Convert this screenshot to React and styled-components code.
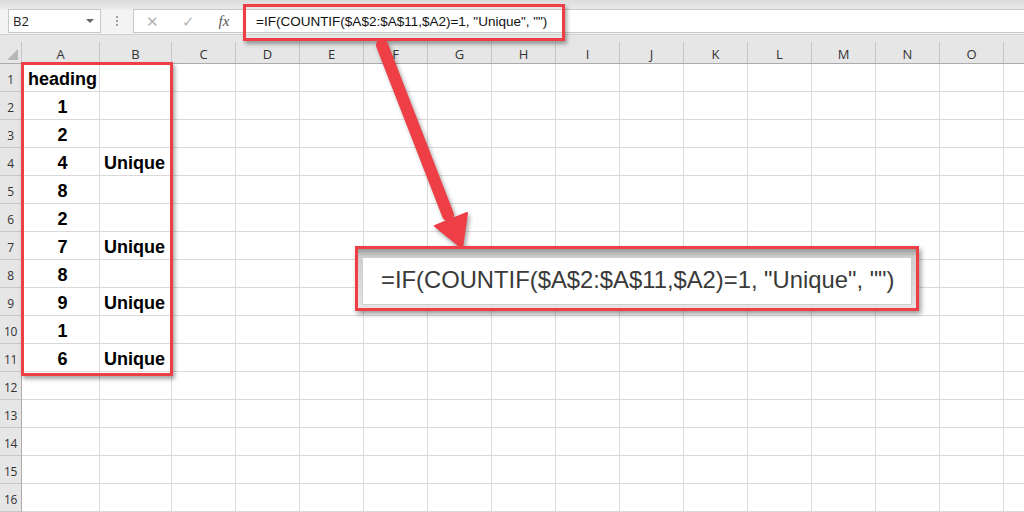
import React from 'react';
import styled, { createGlobalStyle } from 'styled-components';

const GlobalStyle = createGlobalStyle`
    html, body {
        margin: 0;
        padding: 0;
        background: #ffffff;
        overflow: hidden;
    }
    * {
        box-sizing: border-box;
    }
`

const RED = '#ee3f46';

const Page = styled.div`
    position: relative;
    width: 1024px;
    height: 512px;
    overflow: hidden;
    font-family: "Open Sans", "Liberation Sans", sans-serif;
    background: #ffffff;
`

const FormulaBar = styled.div`
    display: flex;
    align-items: flex-end;
    height: 35px;
    padding: 0 0 1px 8px;
    background: linear-gradient(#dcdcdc 0px, #e9e9e9 9px, #f3f3f3 10px, #f3f3f3 100%);
    border-bottom: 1px solid #d0d0d0;
`

const NameBox = styled.div`
    display: flex;
    align-items: center;
    justify-content: space-between;
    width: 93px;
    height: 24px;
    padding: 0 6px 0 4px;
    background: #ffffff;
    border: 1px solid #c8c8c8;
    font-size: 13px;
    color: #222;
`

const Caret = styled.span`
    width: 0;
    height: 0;
    border-left: 4px solid transparent;
    border-right: 4px solid transparent;
    border-top: 4px solid #666;
`

const Dots = styled.div`
    display: flex;
    flex-direction: column;
    justify-content: center;
    gap: 2px;
    width: 32px;
    height: 24px;
    align-items: center;
    span {
        width: 2px;
        height: 2px;
        background: #a0a0a0;
    }
`

const FormulaInput = styled.div`
    flex: 1;
    display: flex;
    align-items: center;
    height: 24px;
    background: #ffffff;
    border: 1px solid #c8c8c8;
    border-right: none;
`

const ToolButton = styled.div`
    display: flex;
    align-items: center;
    justify-content: center;
    width: ${p => p.w || 36}px;
    height: 22px;
    color: #b4b4b4;
    font-size: 15px;
`

const Fx = styled.span`
    font-family: "Liberation Serif", serif;
    font-style: italic;
    font-size: 15px;
    color: #555;
`

const FormulaText = styled.div`
    padding-left: 14px;
    font-family: "Liberation Sans", sans-serif;
    font-size: 13.5px;
    color: #111;
    white-space: nowrap;
`

const Sheet = styled.div`
    display: flex;
    flex-direction: column;
`

const HeadRow = styled.div`
    display: flex;
    height: 29px;
    padding-top: 7px;
    background: #e6e6e6;
    border-bottom: 1px solid #ababab;
`

const Corner = styled.div`
    position: relative;
    flex: 0 0 22px;
    border-right: 1px solid #c6c6c6;
    &::after {
        content: "";
        position: absolute;
        right: 3px;
        bottom: 3px;
        width: 0;
        height: 0;
        border-left: 11px solid transparent;
        border-bottom: 11px solid #b7b7b7;
    }
`

const ColHead = styled.div`
    flex: 0 0 ${p => p.w}px;
    display: flex;
    align-items: center;
    justify-content: center;
    padding-top: 3px;
    border-right: 1px solid #c6c6c6;
    font-size: 13px;
    color: #333;
`

const Row = styled.div`
    display: flex;
    height: 28px;
`

const RowHead = styled.div`
    flex: 0 0 22px;
    display: flex;
    align-items: center;
    justify-content: center;
    padding-top: 4px;
    background: #e6e6e6;
    border-right: 1px solid #ababab;
    border-bottom: 1px solid #c6c6c6;
    font-size: 12px;
    color: #333;
    letter-spacing: -0.3px;
`

const Cell = styled.div`
    flex: 0 0 ${p => p.w}px;
    display: flex;
    align-items: center;
    justify-content: ${p => (p.center ? 'center' : 'flex-start')};
    padding: 4px 0 0 4px;
    border-right: 1px solid #d9d9d9;
    border-bottom: 1px solid #d9d9d9;
    font-family: "Liberation Sans", sans-serif;
    font-weight: bold;
    font-size: 18px;
    color: #000;
    white-space: nowrap;
`

const Highlight = styled.div`
    position: absolute;
    left: ${p => p.x}px;
    top: ${p => p.y}px;
    width: ${p => p.w}px;
    height: ${p => p.h}px;
    border: 3px solid ${RED};
    box-shadow: 2px 3px 4px rgba(0, 0, 0, 0.35);
    pointer-events: none;
`

const Callout = styled.div`
    position: absolute;
    left: 355px;
    top: 246px;
    width: 564px;
    height: 65px;
    padding: 8px 4px 3px 4px;
    border: 3px solid ${RED};
    background: linear-gradient(#9a9a9a 0px, #cfcfcf 8px, #e4e4e4 100%);
    box-shadow: 2px 3px 5px rgba(0, 0, 0, 0.4);
`

const CalloutField = styled.div`
    display: flex;
    align-items: center;
    height: 100%;
    padding: 0 0 2px 18px;
    background: #ffffff;
    border: 1px solid #cfcfcf;
    font-family: "Liberation Sans", sans-serif;
    font-size: 23.8px;
    color: #3a3a3a;
    white-space: nowrap;
`

const ArrowSvg = styled.svg`
    position: absolute;
    left: 370px;
    top: 35px;
    overflow: visible;
    filter: drop-shadow(2px 3px 2px rgba(0, 0, 0, 0.35));
`

const formula = '=IF(COUNTIF($A$2:$A$11,$A2)=1, "Unique", "")';

const columns = [
    ['A', 78], ['B', 72], ['C', 64], ['D', 64], ['E', 64], ['F', 64], ['G', 64],
    ['H', 64], ['I', 64], ['J', 64], ['K', 64], ['L', 64], ['M', 64], ['N', 64],
    ['O', 64], ['', 64],
];

const data = [
    ['heading', ''], ['1', ''], ['2', ''], ['4', 'Unique'], ['8', ''], ['2', ''],
    ['7', 'Unique'], ['8', ''], ['9', 'Unique'], ['1', ''], ['6', 'Unique'],
    ['', ''], ['', ''], ['', ''], ['', ''], ['', ''],
];

function Arrow() {
    return (
        <ArrowSvg width="110" height="220" viewBox="0 0 110 220">
            <line x1="12" y1="10" x2="78" y2="180" stroke={RED} strokeWidth="12" strokeLinecap="round" />
            <polygon points="92,213 97,178 65,191" fill={RED} stroke={RED} strokeWidth="2" strokeLinejoin="round" />
        </ArrowSvg>
    )
}

function App() {
    return (
        <Page>
            <GlobalStyle />
            <FormulaBar>
                <NameBox>
                    <span>B2</span>
                    <Caret />
                </NameBox>
                <Dots><span /><span /><span /></Dots>
                <FormulaInput>
                    <ToolButton w={36}>✕</ToolButton>
                    <ToolButton w={36}>✓</ToolButton>
                    <ToolButton w={36}><Fx>fx</Fx></ToolButton>
                    <FormulaText>{formula}</FormulaText>
                </FormulaInput>
            </FormulaBar>
            <Sheet>
                <HeadRow>
                    <Corner />
                    {columns.map(([name, w], i) => (
                        <ColHead key={i} w={w}>{name}</ColHead>
                    ))}
                </HeadRow>
                {data.map(([a, b], r) => (
                    <Row key={r}>
                        <RowHead>{r + 1}</RowHead>
                        {columns.map(([name, w], c) => (
                            <Cell key={c} w={w} center={c === 0}>
                                {c === 0 ? a : c === 1 ? b : ''}
                            </Cell>
                        ))}
                    </Row>
                ))}
            </Sheet>
            <Highlight x={243} y={4} w={322} h={37} />
            <Highlight x={21} y={62} w={152} h={314} />
            <Arrow />
            <Callout>
                <CalloutField>{formula}</CalloutField>
            </Callout>
        </Page>
    )
}

export default App
